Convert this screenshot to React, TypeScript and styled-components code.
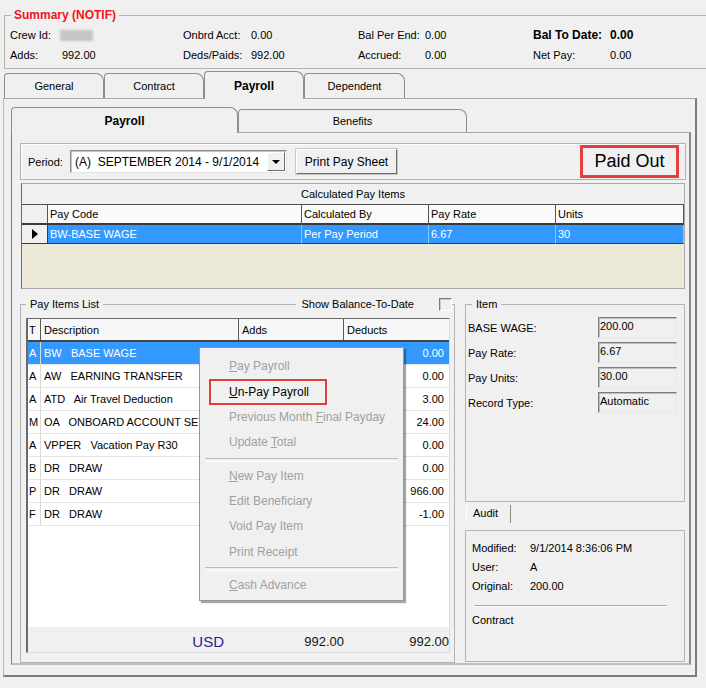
import React from 'react';
import styled, { createGlobalStyle } from 'styled-components';

const GlobalStyle = createGlobalStyle`
  html, body { margin: 0; padding: 0; background: #f0f0f0; }
  body { font-family: "Liberation Sans", Arial, sans-serif; font-size: 11px; color: #000; }
  * { box-sizing: border-box; }
`;

const Window = styled.div`
  width: 706px;
  height: 688px;
  overflow: hidden;
  padding-top: 8px;
  background: #f0f0f0;
`;

// group boxes -------

const GroupBox = styled.fieldset`
  margin: 0;
  min-width: 0;
  border: 1px solid #b3b3b3;
`;

const Legend = styled.legend<{ $red?: boolean }>`
  padding: 0 3px;
  margin-left: 1px;
  line-height: 14px;
  font-size: ${p => (p.$red ? 12 : 11)}px;
  font-weight: ${p => (p.$red ? 'bold' : 'normal')};
  color: ${p => (p.$red ? '#f2141b' : '#000')};
`;

// summary -------

const SummaryBox = styled(GroupBox)`
  width: 712px;
  margin-left: 4px;
  padding: 3px 0 3px 5px;
`;

const SummaryGrid = styled.div`
  display: grid;
  grid-template-columns: 52px 121px 68px 107px 67px 108px 77px 1fr;
  grid-auto-rows: 20px;
  align-items: center;
`;

const Strong = styled.span`
  font-weight: bold;
  font-size: 12px;
`;

const Blurred = styled.span`
  display: block;
  width: 33px;
  height: 11px;
  margin-left: -2px;
  background: #c6c6c6;
  filter: blur(1.2px);
`;

// tabs -------

const TabRow = styled.div<{ $indent: number; $h: number }>`
  display: flex;
  align-items: flex-end;
  height: ${p => p.$h}px;
  padding-left: ${p => p.$indent}px;
  position: relative;
  z-index: 1;
`;

const Tab = styled.div<{ $active?: boolean; $w: number; $lift: number }>`
  width: ${p => p.$w}px;
  height: ${p => (p.$active ? p.$lift : p.$lift - 3)}px;
  margin-bottom: ${p => (p.$active ? -1 : 0)}px;
  display: flex;
  align-items: center;
  justify-content: center;
  border: 1px solid #8d8d8d;
  border-bottom: none;
  border-radius: 4px 8px 0 0;
  background: #f0f0f0;
  font-size: ${p => (p.$active ? 12 : 11)}px;
  font-weight: ${p => (p.$active ? 'bold' : 'normal')};
`;

const OuterPanel = styled.div`
  margin-left: 3px;
  width: 694px;
  height: 579px;
  border-top: 1px solid #a9a9a9;
  border-left: 1px solid #b9b9b9;
  border-right: 2px solid #7d7d7d;
  border-bottom: 2px solid #7d7d7d;
  padding: 8px 4px 0 7px;
`;

const InnerPanel = styled.div`
  width: 680px;
  height: 533px;
  border-top: 1px solid #a9a9a9;
  border-left: 1px solid #7d7d7d;
  border-right: 2px solid #8a8a8a;
  border-bottom: 2px solid #bdbdbd;
  padding: 10px 0 0 8px;
  display: flex;
  flex-direction: column;
`;

// period bar -------

const PeriodFrame = styled.div`
  width: 666px;
  height: 37px;
  border: 1px solid #b3b3b3;
  box-shadow: inset 1px 1px 0 #fff;
  display: flex;
  align-items: center;
  padding: 0 6px 0 7px;
`;

const PeriodLabel = styled.span`
  width: 42px;
`;

const Combo = styled.div`
  width: 217px;
  height: 23px;
  display: flex;
  align-items: center;
  background: #fff;
  border: 1px solid;
  border-color: #8c8c8c #e3e3e3 #e3e3e3 #8c8c8c;
  box-shadow: inset 1px 1px 0 #c4c4c4;
  padding-left: 4px;
  font-size: 12px;
  white-space: pre;
`;

const DropButton = styled.div`
  margin-left: auto;
  margin-right: 1px;
  width: 18px;
  height: 19px;
  display: flex;
  align-items: center;
  justify-content: center;
  background: #f0f0f0;
  border: 1px solid;
  border-color: #fff #6b6b6b #6b6b6b #fff;
  &::after {
    content: '';
    border-left: 4px solid transparent;
    border-right: 4px solid transparent;
    border-top: 4px solid #000;
  }
`;

const PushButton = styled.div`
  margin-left: 9px;
  width: 101px;
  height: 25px;
  display: flex;
  align-items: center;
  justify-content: center;
  background: #f0f0f0;
  border: 1px solid;
  border-color: #fff #6b6b6b #6b6b6b #fff;
  box-shadow: 0 0 0 1px #c8c8c8;
  font-size: 12px;
`;

const PaidOut = styled.div`
  margin-left: auto;
  width: 99px;
  height: 33px;
  display: flex;
  align-items: center;
  justify-content: center;
  border: 3px solid #e2403d;
  font-size: 18px;
`;

// calculated pay items -------

const CalcGrid = styled.div`
  margin: 3px 0 0 1px;
  width: 664px;
  height: 106px;
  border: 1px solid #a9a9a9;
  border-left-color: #6a6a6a;
  background: #ece9d8;
`;

const CalcCaption = styled.div`
  height: 21px;
  line-height: 21px;
  text-align: center;
  background: #f0f0f0;
  border-bottom: 1px solid #4f4f4f;
`;

const CalcRow = styled.div`
  display: grid;
  grid-template-columns: 26px 254px 127px 127px 1fr;
`;

const CalcHead = styled.div<{ $corner?: boolean }>`
  height: 20px;
  line-height: 18px;
  padding-left: 2px;
  background: ${p => (p.$corner ? '#f0f0f0' : '#fafafa')};
  border-right: 1px solid #555;
  border-bottom: 2px solid #3a3a3a;
`;

const CalcCell = styled.div`
  height: 19px;
  line-height: 18px;
  padding-left: 2px;
  background: #3399ff;
  color: #fff;
  border-right: 1px solid #8cc3f7;
  border-bottom: 1px solid #3a3a3a;
`;

const RowPointer = styled.div`
  height: 19px;
  display: flex;
  align-items: center;
  justify-content: center;
  background: #f0f0f0;
  border-right: 1px solid #3a3a3a;
  border-bottom: 1px solid #3a3a3a;
  &::after {
    content: '';
    border-left: 6px solid #000;
    border-top: 5px solid transparent;
    border-bottom: 5px solid transparent;
  }
`;

// lower part -------

const Lower = styled.div`
  margin-top: 8px;
  display: flex;
  gap: 10px;
`;

const ListBox = styled(GroupBox)`
  width: 435px;
  height: 366px;
  padding: 7px 4px 9px 5px;
`;

const ListLegend = styled.legend`
  width: 426px;
  padding: 0;
  line-height: 14px;
  display: flex;
  align-items: center;
`;

const LegendText = styled.span`
  padding: 0 4px;
`;

const LegendLine = styled.span`
  flex: 1;
  height: 1px;
  background: #b3b3b3;
  margin-right: 5px;
`;

const CheckBox = styled.span`
  width: 13px;
  height: 13px;
  margin-left: 25px;
  border: 1px solid;
  border-color: #7a7a7a #fff #fff #7a7a7a;
  box-shadow: inset 1px 1px 0 #c8c8c8;
`;

const ListGrid = styled.div`
  position: relative;
  height: 335px;
  display: flex;
  flex-direction: column;
  background: #fff;
  border-top: 1px solid #6a6a6a;
  border-left: 2px solid #6a6a6a;
  border-right: 1px solid #dcdcdc;
  border-bottom: 1px solid #dcdcdc;
`;

const ListRow = styled.div<{ $selected?: boolean; $head?: boolean }>`
  display: grid;
  grid-template-columns: 13px 198px 105px 1fr;
  height: 23px;
  align-items: stretch;
  background: ${p => (p.$head ? '#f7f7f7' : p.$selected ? '#3399ff' : '#fff')};
  color: ${p => (p.$selected ? '#fff' : '#000')};
  border-bottom: ${p => (p.$head ? '2px solid #454545' : '1px solid #e4e4e4')};
`;

const ListCell = styled.div<{ $right?: boolean; $head?: boolean }>`
  display: flex;
  align-items: center;
  justify-content: ${p => (p.$right ? 'flex-end' : 'flex-start')};
  padding: ${p => (p.$right ? '0 4px 0 0' : '0 0 0 3px')};
  white-space: pre;
  overflow: hidden;
  border-right: 1px solid ${p => (p.$head ? '#5a5a5a' : 'transparent')};
`;

const TypeCell = styled(ListCell)`
  padding-left: 1px;
  border-right: 1px solid ${p => (p.$head ? '#5a5a5a' : '#d9d9d9')};
`;

const ListBody = styled.div`
  flex: 1;
`;

const Totals = styled.div`
  display: grid;
  grid-template-columns: 13px 198px 105px 1fr;
  height: 25px;
  padding-top: 4px;
  align-items: center;
  background: #f0f0f0;
  font-size: 13px;
  color: #141414;
  text-align: right;
`;

const Currency = styled.span`
  padding-right: 15px;
  font-size: 15px;
  color: #24248f;
`;

// context menu -------

const Menu = styled.div`
  position: absolute;
  left: 171px;
  top: 28px;
  width: 205px;
  padding: 6px 0 1px;
  background: #f0f0f0;
  border: 1px solid #979797;
  box-shadow: 2px 2px 1px rgba(0, 0, 0, 0.35);
  font-size: 12px;
  z-index: 2;
`;

const MenuItem = styled.div<{ $enabled?: boolean; $boxed?: boolean }>`
  height: 25.4px;
  line-height: 25px;
  padding-left: ${p => (p.$boxed ? 9 : 29)}px;
  color: ${p => (p.$enabled ? '#000' : '#a0a0a0')};
  white-space: nowrap;
`;

const Boxed = styled.span`
  display: inline-block;
  height: 26px;
  line-height: 22px;
  vertical-align: top;
  padding: 0 16px 0 18px;
  border: 2px solid #e2403d;
`;

const MenuSeparator = styled.div`
  height: 8px;
  margin: 0 5px;
  display: flex;
  align-items: center;
  &::after {
    content: '';
    flex: 1;
    height: 2px;
    border-top: 1px solid #bcbcbc;
    border-bottom: 1px solid #fff;
  }
`;

// right column -------

const RightCol = styled.div`
  width: 220px;
  display: flex;
  flex-direction: column;
`;

const ItemBox = styled(GroupBox)`
  height: 205px;
  padding: 6px 2px 0 2px;
`;

const ItemLegend = styled(Legend)`
  margin-left: 4px;
  padding: 0 4px;
`;

const ItemGrid = styled.div`
  display: grid;
  grid-template-columns: 130px 79px;
  grid-auto-rows: 21px;
  row-gap: 4px;
  align-items: center;
`;

const Field = styled.div`
  height: 21px;
  padding: 2px 0 0 1px;
  background: #f0f0f0;
  border: 1px solid;
  border-color: #7c7c7c #e8e8e8 #e8e8e8 #7c7c7c;
  box-shadow: inset 1px 1px 0 #bdbdbd;
`;

const AuditTab = styled.div`
  margin: 3px 0 0 1px;
  width: 45px;
  height: 18px;
  line-height: 17px;
  padding-left: 6px;
  border-left: 1px solid #fff;
  border-right: 1px solid #8a8a8a;
`;

const AuditBox = styled.div`
  margin-top: 7px;
  height: 132px;
  border: 1px solid #b3b3b3;
  padding: 7px 0 0 6px;
`;

const AuditRow = styled.div`
  display: grid;
  grid-template-columns: 58px 1fr;
  height: 19px;
  align-items: center;
`;

const AuditSeparator = styled.div`
  margin: 10px 17px 0 2px;
  height: 2px;
  border-top: 1px solid #a9a9a9;
  border-bottom: 1px solid #fff;
`;

const AuditNote = styled.div`
  margin-top: 6px;
  line-height: 14px;
`;

// data -------

const payItems = [
  { t: 'A', code: 'BW', desc: 'BASE WAGE', ded: '0.00' },
  { t: 'A', code: 'AW', desc: 'EARNING TRANSFER', ded: '0.00' },
  { t: 'A', code: 'ATD', desc: 'Air Travel Deduction', ded: '3.00' },
  { t: 'M', code: 'OA', desc: 'ONBOARD ACCOUNT SETTLEMENT', ded: '24.00' },
  { t: 'A', code: 'VPPER', desc: 'Vacation Pay R30', ded: '0.00' },
  { t: 'B', code: 'DR', desc: 'DRAW', ded: '0.00' },
  { t: 'P', code: 'DR', desc: 'DRAW', ded: '966.00' },
  { t: 'F', code: 'DR', desc: 'DRAW', ded: '-1.00' },
];

const itemFields = [
  ['BASE WAGE:', '200.00'],
  ['Pay Rate:', '6.67'],
  ['Pay Units:', '30.00'],
  ['Record Type:', 'Automatic'],
];

const App = () => {
  return (
    <Window>
      <GlobalStyle />

      <SummaryBox>
        <Legend $red>Summary (NOTIF)</Legend>
        <SummaryGrid>
          <span>Crew Id:</span>
          <Blurred />
          <span>Onbrd Acct:</span>
          <span>0.00</span>
          <span>Bal Per End:</span>
          <span>0.00</span>
          <Strong>Bal To Date:</Strong>
          <Strong>0.00</Strong>

          <span>Adds:</span>
          <span>992.00</span>
          <span>Deds/Paids:</span>
          <span>992.00</span>
          <span>Accrued:</span>
          <span>0.00</span>
          <span>Net Pay:</span>
          <span>0.00</span>
        </SummaryGrid>
      </SummaryBox>

      <TabRow $indent={4} $h={29}>
        <Tab $w={100} $lift={28}>General</Tab>
        <Tab $w={100} $lift={28}>Contract</Tab>
        <Tab $w={100} $lift={28} $active>Payroll</Tab>
        <Tab $w={101} $lift={28}>Dependent</Tab>
      </TabRow>

      <OuterPanel>
        <TabRow $indent={0} $h={25}>
          <Tab $w={227} $lift={26} $active>Payroll</Tab>
          <Tab $w={229} $lift={26}>Benefits</Tab>
        </TabRow>

        <InnerPanel>
          <PeriodFrame>
            <PeriodLabel>Period:</PeriodLabel>
            <Combo>
              (A)  SEPTEMBER 2014 - 9/1/2014
              <DropButton />
            </Combo>
            <PushButton>Print Pay Sheet</PushButton>
            <PaidOut>Paid Out</PaidOut>
          </PeriodFrame>

          <CalcGrid>
            <CalcCaption>Calculated Pay Items</CalcCaption>
            <CalcRow>
              <CalcHead $corner />
              <CalcHead>Pay Code</CalcHead>
              <CalcHead>Calculated By</CalcHead>
              <CalcHead>Pay Rate</CalcHead>
              <CalcHead>Units</CalcHead>
            </CalcRow>
            <CalcRow>
              <RowPointer />
              <CalcCell>BW-BASE WAGE</CalcCell>
              <CalcCell>Per Pay Period</CalcCell>
              <CalcCell>6.67</CalcCell>
              <CalcCell>30</CalcCell>
            </CalcRow>
          </CalcGrid>

          <Lower>
            <ListBox>
              <ListLegend>
                <LegendText>Pay Items List</LegendText>
                <LegendLine />
                <span>Show Balance-To-Date</span>
                <CheckBox />
              </ListLegend>

              <ListGrid>
                <ListRow $head>
                  <TypeCell $head>T</TypeCell>
                  <ListCell $head>Description</ListCell>
                  <ListCell $head>Adds</ListCell>
                  <ListCell>Deducts</ListCell>
                </ListRow>

                {payItems.map((item, i) => (
                  <ListRow key={i} $selected={i === 0}>
                    <TypeCell>{item.t}</TypeCell>
                    <ListCell>{item.code + '   ' + item.desc}</ListCell>
                    <ListCell />
                    <ListCell $right>{item.ded}</ListCell>
                  </ListRow>
                ))}

                <ListBody />

                <Totals>
                  <span />
                  <Currency>USD</Currency>
                  <span>992.00</span>
                  <span>992.00</span>
                </Totals>

                <Menu>
                  <MenuItem><u>P</u>ay Payroll</MenuItem>
                  <MenuItem $enabled $boxed>
                    <Boxed><u>U</u>n-Pay Payroll</Boxed>
                  </MenuItem>
                  <MenuItem>Previous Month <u>F</u>inal Payday</MenuItem>
                  <MenuItem>Update <u>T</u>otal</MenuItem>
                  <MenuSeparator />
                  <MenuItem><u>N</u>ew Pay Item</MenuItem>
                  <MenuItem>Edit Beneficiary</MenuItem>
                  <MenuItem>Void Pay Item</MenuItem>
                  <MenuItem>Print Receipt</MenuItem>
                  <MenuSeparator />
                  <MenuItem><u>C</u>ash Advance</MenuItem>
                </Menu>
              </ListGrid>
            </ListBox>

            <RightCol>
              <ItemBox>
                <ItemLegend>Item</ItemLegend>
                <ItemGrid>
                  {itemFields.map(([label, value]) => (
                    <React.Fragment key={label}>
                      <span>{label}</span>
                      <Field>{value}</Field>
                    </React.Fragment>
                  ))}
                </ItemGrid>
              </ItemBox>

              <AuditTab>Audit</AuditTab>
              <AuditBox>
                <AuditRow><span>Modified:</span><span>9/1/2014 8:36:06 PM</span></AuditRow>
                <AuditRow><span>User:</span><span>A</span></AuditRow>
                <AuditRow><span>Original:</span><span>200.00</span></AuditRow>
                <AuditSeparator />
                <AuditNote>Contract</AuditNote>
              </AuditBox>
            </RightCol>
          </Lower>
        </InnerPanel>
      </OuterPanel>
    </Window>
  );
};

export default App;
